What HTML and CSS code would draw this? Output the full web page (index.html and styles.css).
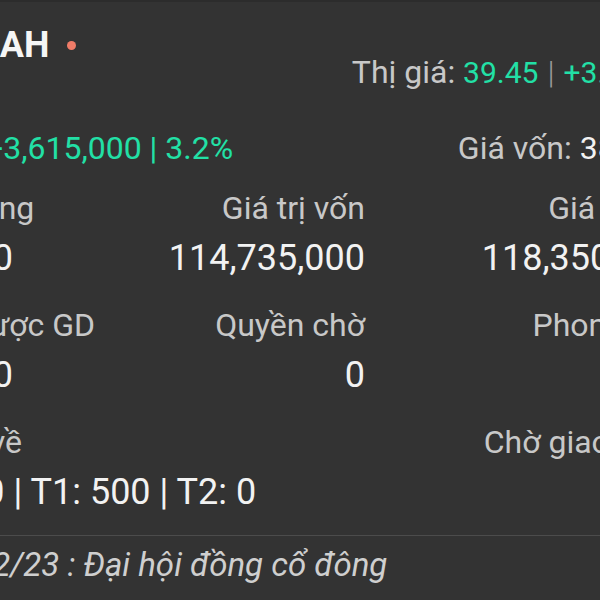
FILE: index.html
```html
<!DOCTYPE html>
<html lang="vi">

<head>
    <meta charset="UTF-8">
    <meta name="viewport" content="width=device-width, initial-scale=1.0">
    <title>Danh mục</title>
    <link rel="stylesheet" href="styles.css">
</head>

<body>
    <div class="card">
        <div class="head">
            <div class="ticker">HAH <span class="dot"></span></div>
            <div class="price">Thị giá: <span class="up small">39.45</span><span class="sep">|</span><span class="up small">+3.27%</span></div>
            <div class="gain up">+3,615,000 | 3.2%</div>
            <div class="cost">Giá vốn: <span class="white">38.245</span></div>
        </div>

        <div class="stats">
            <div class="cell">
                <div class="label">KL tổng</div>
                <div class="value">3,000</div>
            </div>
            <div class="cell">
                <div class="label">Giá trị vốn</div>
                <div class="value">114,735,000</div>
            </div>
            <div class="cell">
                <div class="label">Giá trị TT</div>
                <div class="value">118,350,000</div>
            </div>

            <div class="cell">
                <div class="label">KL được GD</div>
                <div class="value">2,500</div>
            </div>
            <div class="cell">
                <div class="label">Quyền chờ</div>
                <div class="value">0</div>
            </div>
            <div class="cell">
                <div class="label">Phong tỏa</div>
                <div class="value">0</div>
            </div>

            <div class="cell">
                <div class="label">Chờ về</div>
                <div class="value">T0: 0 | T1: 500 | T2: 0</div>
            </div>
            <div class="cell"></div>
            <div class="cell">
                <div class="label">Chờ giao dịch</div>
                <div class="value">0</div>
            </div>
        </div>

        <div class="event">28/02/23 : Đại hội đồng cổ đông</div>
    </div>
</body>

</html>
```

FILE: styles.css
```css
body {
    margin: 0;
    height: 100vh;
    overflow: hidden;
    background-color: #333333;
    font-family: Roboto, "Noto Sans", sans-serif;
    color: #c8c8c8;
}

.card {
    width: 753px;
    margin-left: -75px;
    padding-top: 21px;
    border-top: 2px solid #2c2c2c;
}

.up {
    color: #22e0a6;
}

.small {
    font-size: 30px;
}

.white {
    color: #f2f2f2;
}

/* header: ticker / price, gain / cost */
.head {
    display: grid;
    grid-template-columns: 1fr auto;
    grid-template-rows: 70px auto;
    row-gap: 35px;
    font-size: 32px;
    line-height: 40px;
}

.ticker {
    display: flex;
    align-items: center;
    gap: 18px;
    align-self: start;
    padding-left: 49px;
    font-size: 36px;
    line-height: 44px;
    font-weight: bold;
    color: #f5f5f5;
}

.dot {
    width: 9px;
    height: 9px;
    border-radius: 50%;
    background-color: #f07c68;
}

.price {
    justify-self: end;
    align-self: end;
    padding-right: 17px;
}

.sep {
    margin: 0 9px;
    color: #9a9a9a;
    font-weight: 300;
}

.gain {
    padding-left: 60px;
}

.cost {
    justify-self: end;
}

/* stats grid */
.stats {
    display: grid;
    grid-template-columns: 198px 242px 313px;
    row-gap: 25px;
    margin-top: 20px;
}

.cell {
    white-space: nowrap;
}

.cell:nth-child(3n+2),
.cell:nth-child(3n) {
    text-align: right;
}

.label {
    font-size: 32px;
    line-height: 40px;
}

.value {
    margin-top: 8px;
    font-size: 36px;
    line-height: 44px;
    color: #f2f2f2;
}

.event {
    margin-top: 21px;
    padding-top: 9px;
    border-top: 1px solid #4c4c4c;
    font-size: 33px;
    line-height: 40px;
    font-style: italic;
    color: #cfcfcf;
}
```
